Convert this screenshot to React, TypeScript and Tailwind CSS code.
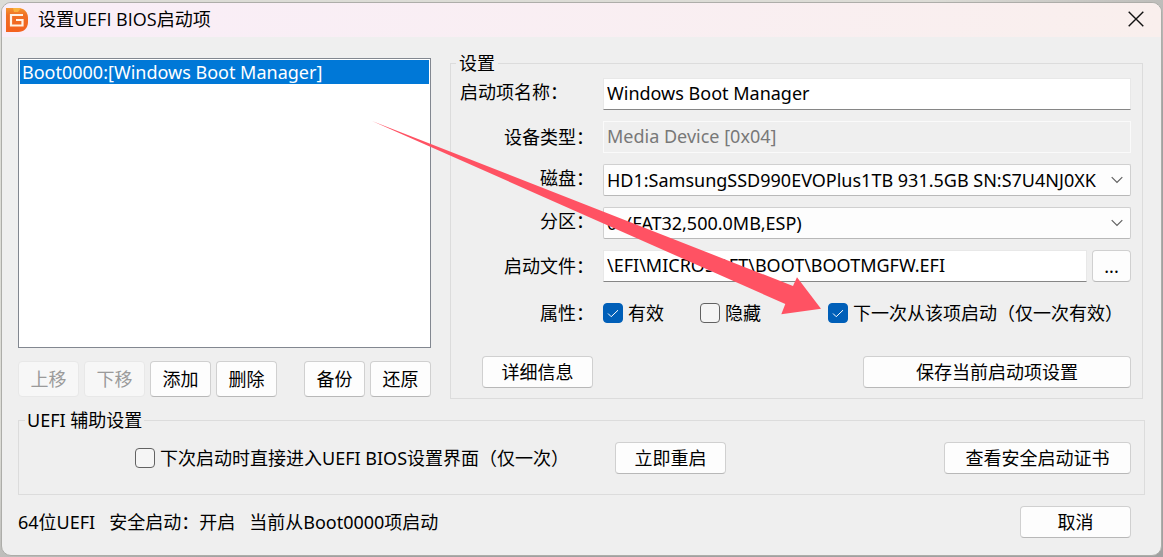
import { useState } from "react";
import type { ButtonHTMLAttributes, ReactNode } from "react";

const FIELD_LABEL = "w-[134px] shrink-0 text-right leading-6";

function PushButton({ className = "", ...rest }: ButtonHTMLAttributes<HTMLButtonElement>) {
  return (
    <button
      type="button"
      className={`shrink-0 whitespace-nowrap rounded border border-[#d0d0d0] border-b-[#b8b8b8] bg-[#fdfdfd] text-center leading-6 hover:bg-[#f3f8fd] disabled:border-[#e8e8e8] disabled:bg-[#f7f7f7] disabled:text-[#9a9a9a] ${className}`}
      {...rest}
    />
  );
}

function CheckBox({ label, initial = false, className = "" }: { label: string; initial?: boolean; className?: string }) {
  const [checked, setChecked] = useState(initial);
  return (
    <label className={`flex shrink-0 items-center gap-[5px] whitespace-nowrap ${className}`}>
      <span className="grid size-5 shrink-0">
        <input
          type="checkbox"
          checked={checked}
          onChange={(e) => setChecked(e.target.checked)}
          className="col-start-1 row-start-1 size-5 appearance-none rounded border border-[#626262] bg-[#f5f5f5] checked:border-[#005fb8] checked:bg-[#005fb8]"
        />
        {checked && (
          <svg viewBox="0 0 20 20" className="pointer-events-none col-start-1 row-start-1 size-5" fill="none" stroke="#fff" strokeWidth="1">
            <path d="M5 10.5 8.2 13.7 15 7.2" />
          </svg>
        )}
      </span>
      {label}
    </label>
  );
}

function SelectBox({ id, value }: { id: string; value: string }) {
  return (
    <div className="grid min-w-0 flex-1 items-center">
      <select
        id={id}
        className="col-start-1 row-start-1 h-8 w-full min-w-0 appearance-none overflow-hidden rounded-xs border border-[#d0d0d0] border-b-[#b8b8b8] bg-[#fdfdfd] pl-[3px] pr-7"
      >
        <option>{value}</option>
      </select>
      <svg
        viewBox="0 0 12 8"
        className="pointer-events-none col-start-1 row-start-1 mr-2 h-2 w-3 justify-self-end"
        fill="none"
        stroke="#606060"
        strokeWidth="1.2"
      >
        <path d="M.7 1.2 6 6.5 11.3 1.2" />
      </svg>
    </div>
  );
}

function FieldRow({ id, label, className = "", children }: { id: string; label: string; className?: string; children: ReactNode }) {
  return (
    <div className="flex h-8 items-center gap-[9px]">
      <label htmlFor={id} className={`${FIELD_LABEL} ${className}`}>
        {label}
      </label>
      {children}
    </div>
  );
}

function AppLogo() {
  return (
    <svg viewBox="0 0 22 24" className="h-6 w-[22px]">
      <defs>
        <linearGradient id="logo" x1="0" y1="0" x2="0" y2="1">
          <stop offset="0" stopColor="#f5952f" />
          <stop offset="0.3" stopColor="#ef6f25" />
          <stop offset="1" stopColor="#f4611f" />
        </linearGradient>
      </defs>
      <path d="M0 0H12C18 0 22 4 22 10V14C22 20 18 24 12 24H0Z" fill="url(#logo)" />
      <path d="M7 0h8l-3 4H8Z" fill="#f9b13c" />
      <path d="M17 7H5V17.500H16.500V12H10" fill="none" stroke="#fff3e6" strokeWidth="2.200" />
    </svg>
  );
}

export default function App() {
  return (
    <div className="min-h-screen bg-linear-to-br from-[#dcdcd6] from-40% to-[#a0a0a0] to-60% px-px pb-0.5 pt-0.5 font-['Noto_Sans','Noto_Sans_CJK_SC',sans-serif] text-lg leading-6 text-black">
      <main className="relative rounded-[10px] border border-[#adada9] bg-[#efefef]">
        <header className="flex h-[34px] items-center rounded-t-[9px] bg-linear-to-r from-[#f9eef8] to-[#f9efed] pl-1 pr-[17px]">
          <AppLogo />
          <h1 className="ml-[10px] flex-1 pb-0.5 font-['Open_Sans','Noto_Sans_CJK_SC',sans-serif]">设置UEFI BIOS启动项</h1>
          <button type="button" aria-label="关闭" className="mb-0.5 grid size-4 place-items-center">
            <svg viewBox="0 0 16 16" className="size-4" fill="none" stroke="#111" strokeWidth="1.4">
              <path d="M.7.7 15.300 15.300M15.300.7.7 15.300" />
            </svg>
          </button>
        </header>

        <div className="px-4 pb-[17px] pt-4">
          <div className="flex gap-[19px] pr-0.5">
            <section className="flex w-[413px] shrink-0 flex-col pb-0.5 pt-[5px]">
              <ul role="listbox" aria-label="启动项" className="flex-1 border border-[#828790] bg-white p-px">
                <li role="option" aria-selected="true" className="bg-[#0078d7] pl-0.5 text-white">
                  Boot0000:[Windows Boot Manager]
                </li>
              </ul>
              <div className="mt-[13px] flex gap-[5px]">
                <PushButton disabled className="h-9 w-[61px]">上移</PushButton>
                <PushButton disabled className="h-9 w-[61px]">下移</PushButton>
                <PushButton className="h-9 w-[61px]">添加</PushButton>
                <PushButton className="h-9 w-[61px]">删除</PushButton>
                <PushButton className="ml-auto h-9 w-[61px]">备份</PushButton>
                <PushButton className="h-9 w-[61px]">还原</PushButton>
              </div>
            </section>

            <fieldset className="min-w-0 flex-1 border border-[#dcdcdc] pb-[10px] pl-[9px] pr-[11px]">
              <legend className="-ml-1 px-[3px] leading-5">设置</legend>
              <div className="flex flex-col gap-[11px] pt-[5px]">
                <FieldRow id="name" label="启动项名称：" className="pb-1 text-left!">
                  <input
                    id="name"
                    defaultValue="Windows Boot Manager"
                    className="h-8 min-w-0 flex-1 border border-[#e8e8e8] border-b-[#868686] bg-white px-[3px] pb-[3px]"
                  />
                </FieldRow>
                <FieldRow id="type" label="设备类型：">
                  <input
                    id="type"
                    disabled
                    defaultValue="Media Device [0x04]"
                    className="h-8 min-w-0 flex-1 border border-[#fafafa] bg-[#efefef] px-[3px] pb-[3px] text-[#787878]"
                  />
                </FieldRow>
                <FieldRow id="disk" label="磁盘：" className="pb-1">
                  <SelectBox id="disk" value="HD1:SamsungSSD990EVOPlus1TB 931.5GB SN:S7U4NJ0XK" />
                </FieldRow>
                <FieldRow id="part" label="分区：" className="pb-1">
                  <SelectBox id="part" value="0: (FAT32,500.0MB,ESP)" />
                </FieldRow>
                <FieldRow id="file" label="启动文件：">
                  <input
                    id="file"
                    defaultValue="\EFI\MICROSOFT\BOOT\BOOTMGFW.EFI"
                    className="h-8 min-w-0 flex-1 border border-[#e8e8e8] border-b-[#868686] bg-white px-[3px] pb-[3px]"
                  />
                  <PushButton className="-ml-1 h-8 w-[39px]">...</PushButton>
                </FieldRow>
                <div className="mt-1 flex h-8 items-center">
                  <span className={FIELD_LABEL}>属性：</span>
                  <CheckBox label="有效" initial className="ml-[9px] w-[97px]" />
                  <CheckBox label="隐藏" className="w-[128px]" />
                  <CheckBox label="下一次从该项启动（仅一次有效）" initial />
                </div>
              </div>
              <div className="mt-[27px] flex justify-between pl-[22px]">
                <PushButton className="h-8 w-[111px]">详细信息</PushButton>
                <PushButton className="h-8 w-[268px]">保存当前启动项设置</PushButton>
              </div>
            </fieldset>
          </div>

          <fieldset className="mt-[11px] border border-[#dcdcdc] pb-5 pl-[6px] pr-[13px]">
            <legend className="px-0.5 leading-5">UEFI 辅助设置</legend>
            <div className="flex items-center pl-[110px] pt-3">
              <CheckBox label="下次启动时直接进入UEFI BIOS设置界面（仅一次）" className="w-[480px]" />
              <PushButton className="h-8 w-[111px]">立即重启</PushButton>
              <PushButton className="ml-auto h-8 w-[187px]">查看安全启动证书</PushButton>
            </div>
          </fieldset>

          <footer className="mt-[11px] flex items-center pr-[14px]">
            <p className="flex flex-1 gap-[14px]">
              <span>64位UEFI</span>
              <span>安全启动：开启</span>
              <span>当前从Boot0000项启动</span>
            </p>
            <PushButton className="h-8 w-[111px]">取消</PushButton>
          </footer>
        </div>

        {/* Pointer to the one-time boot option */}
        <svg viewBox="0 0 450 195" className="pointer-events-none absolute left-[370px] top-[117px] h-[195px] w-[450px]" aria-hidden="true">
          <path d="M0 1 421 166 425 157.300 449 188.700 409.300 194.200 413.300 184Z" fill="#ff5263" />
        </svg>
      </main>
    </div>
  );
}
